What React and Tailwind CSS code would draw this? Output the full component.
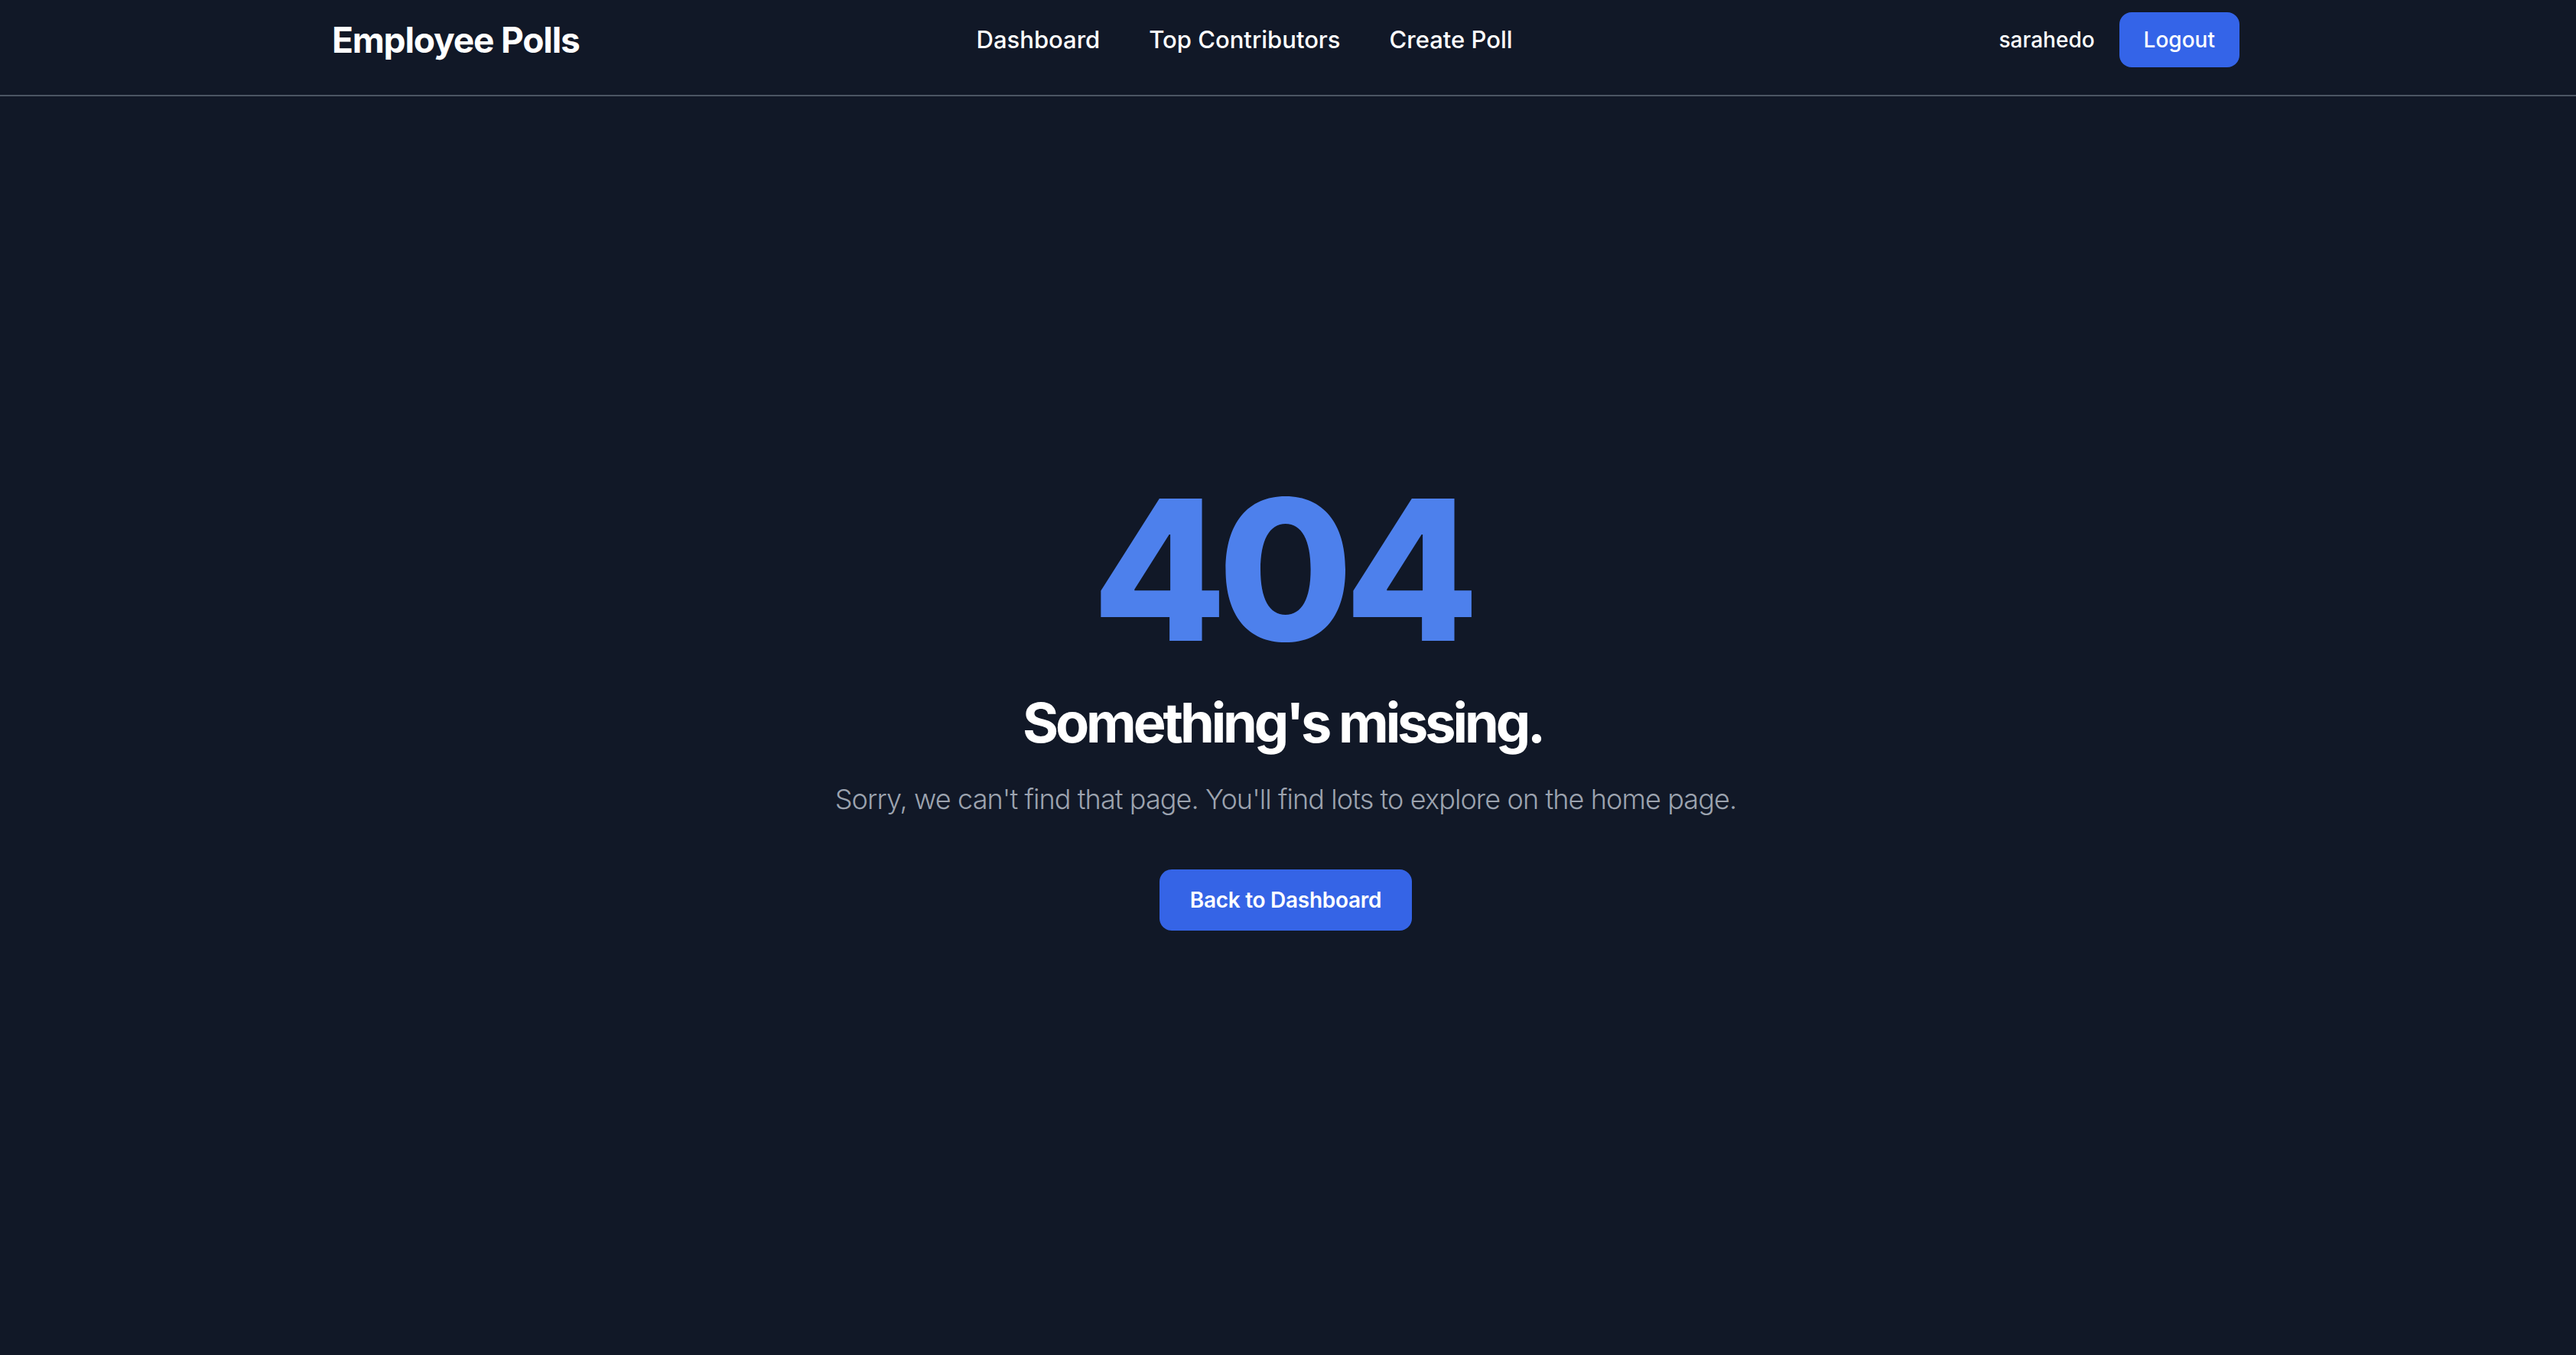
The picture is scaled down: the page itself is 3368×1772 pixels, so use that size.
export default function App() {
  const links = ['Dashboard', 'Top Contributors', 'Create Poll'];

  return (
    <div className="min-h-screen bg-[#111827] font-['Inter',sans-serif] text-white">
      {/* Top bar */}
      <header className="border-b-2 border-[#4b5563]">
        <div className="mx-auto flex max-w-[2560px] items-center pl-[30px] pr-9 pt-4 pb-9">
          <span className="text-[46px] font-bold leading-[64px] tracking-tight">Employee Polls</span>
          <nav className="ml-[519px] flex gap-16 text-[31px] font-medium">
            {links.map((label) => (
              <a key={label} href="#" className="hover:text-gray-300">
                {label}
              </a>
            ))}
          </nav>
          <div className="ml-auto flex items-center gap-8">
            <span className="text-[28px] font-medium">sarahedo</span>
            <button className="rounded-2xl bg-[#3464e8] px-8 py-4 text-[28px] font-medium leading-10">
              Logout
            </button>
          </div>
        </div>
      </header>

      {/* Not found */}
      <main className="flex flex-col items-center pt-[491px] pr-[6px] text-center">
        <h1 className="pr-3 text-[256px] font-extrabold leading-none tracking-[-0.046em] text-[#4d80ec]">404</h1>
        <p className="mt-8 pr-2 text-[72px] font-bold leading-[80px] tracking-[-0.057em]">Something's missing.</p>
        <p className="mt-8 text-[36px] font-light leading-[56px] tracking-[-0.025em] text-[#9ca3af]">
          Sorry, we can't find that page. You'll find lots to explore on the home page.
        </p>
        <button className="mt-16 rounded-2xl bg-[#3564e6] px-10 py-5 text-[28px] font-semibold leading-10 tracking-[-0.01em]">
          Back to Dashboard
        </button>
      </main>
    </div>
  );
}
